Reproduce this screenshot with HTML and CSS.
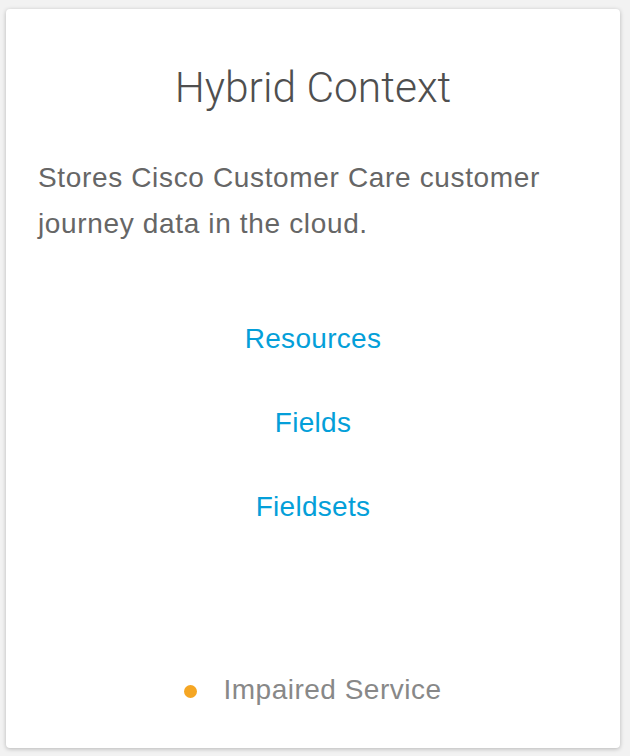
FILE: index.html
```html
<!DOCTYPE html>
<html>
  <head>
    <title>Hybrid Context</title>
    <meta name="viewport" content="width=device-width, initial-scale=1.0" />
    <link rel="stylesheet" href="styles.css">
  </head>
  <body>
    <div class="card">
      <h1 class="card-title">Hybrid Context</h1>
      <p class="card-desc">Stores Cisco Customer Care customer journey data in the cloud.</p>

      <ul class="card-links">
        <li><a href="#">Resources</a></li>
        <li><a href="#">Fields</a></li>
        <li><a href="#">Fieldsets</a></li>
      </ul>

      <div class="card-status">
        <span class="status-dot"></span>
        <span class="status-text">Impaired Service</span>
      </div>
    </div>
  </body>
</html>
```

FILE: styles.css
```css
body {
  font-family: "Liberation Sans", Arial, sans-serif;
  margin: 0;
  padding: 0;
  background-color: #f2f2f2;
}

.card {
  margin: 9px 10px 8px 6px;
  height: 739px;
  box-sizing: border-box;
  background-color: white;
  border-radius: 4px;
  box-shadow: 0px 1px 4px rgba(0, 0, 0, 0.25);
  display: flex;
  flex-direction: column;
}

.card-title {
  text-align: center;
  font-family: Roboto, sans-serif;
  font-weight: 300;
  font-size: 42.5px;
  color: #4f4f4f;
  margin: 53.5px 0 0;
  line-height: 50px;
}

.card-desc {
  font-size: 28px;
  line-height: 46px;
  letter-spacing: 0.65px;
  color: #666;
  margin: 42px 40px 0 32px;
}

.card-links {
  list-style: none;
  margin: 77px 0 0;
  padding: 0;
  text-align: center;
}

.card-links li {
  height: 84px;
  font-size: 28px;
  line-height: 30px;
  letter-spacing: 0.3px;
}

.card-links a {
  color: #049fd9;
  text-decoration: none;
}

.card-status {
  margin-top: auto;
  margin-bottom: 42px;
  display: flex;
  justify-content: center;
  align-items: center;
  gap: 26px;
  color: #888;
  font-size: 28px;
  line-height: 32px;
  letter-spacing: 0.5px;
}

.status-dot {
  width: 13px;
  height: 13px;
  margin-top: 3px;
  border-radius: 50%;
  background-color: #f5a623;
}
```
